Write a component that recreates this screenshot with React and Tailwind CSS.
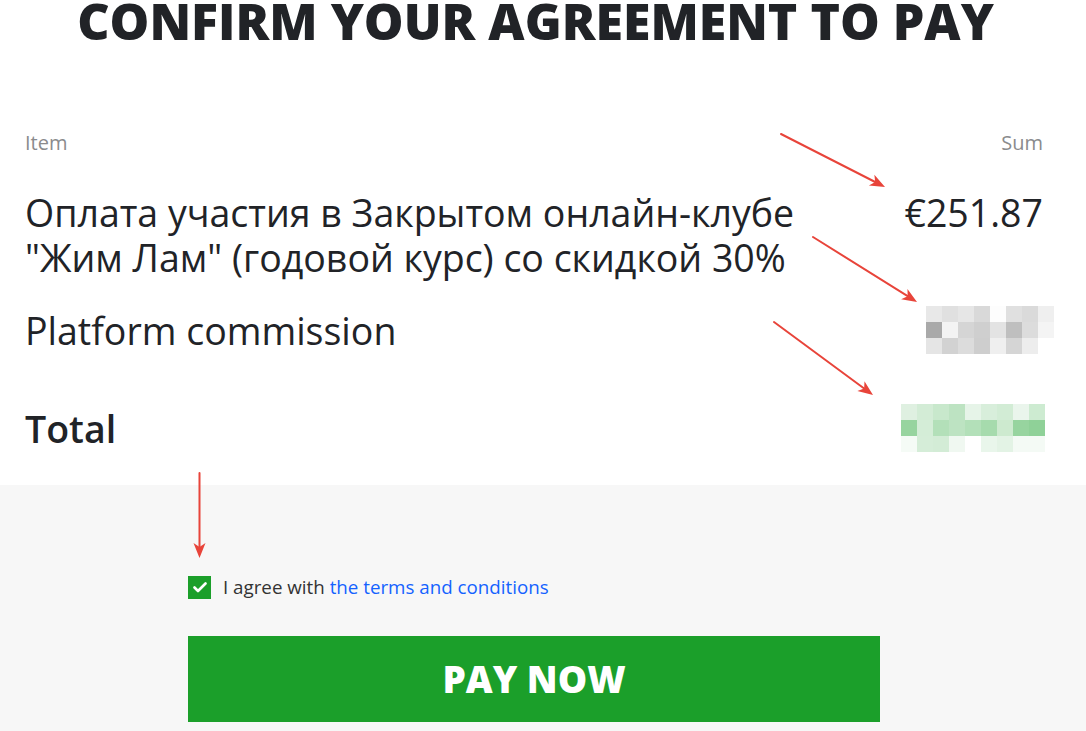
import React from "react";

const grayCells = [
  ["#e8e8e8", "#e0e0e0", "#e6e6e6", "#d9d9d9", "#fdfdfd", "#e0e0e0", "#dadada", "#efefef"],
  ["#a9a9a9", "#f3f3f3", "#d5d5d5", "#cfcfcf", "#e3e3e3", "#bfbfbf", "#dcdcdc", "#f4f4f4"],
  ["#e5e5e5", "#d2d2d2", "#dcdcdc", "#cecece", "#efefef", "#d5d5d5", "#ededed", "#ffffff"],
];

const greenCells = [
  ["#dff0e1", "#d3ecd6", "#c8e8cc", "#bde3c2", "#e6f4e8", "#d8eedb", "#d2ecd5", "#eaf5ec", "#cdebd1"],
  ["#97d49f", "#d4edd7", "#b3e0b9", "#bde3c2", "#b3e0b9", "#a6dbad", "#cdeacf", "#97d49f", "#8fd198"],
  ["#f5fbf6", "#d5edd8", "#d3ecd6", "#f0f8f1", "#ffffff", "#e9f6eb", "#e3f3e5", "#f4faf5", "#f4faf5"],
];

function Pixelated({ rows }) {
  return (
    <div className="flex flex-col">
      {rows.map((row, i) => (
        <div key={i} className="flex">
          {row.map((c, j) => (
            <div key={j} className="w-[16px] h-[16px]" style={{ backgroundColor: c }} />
          ))}
        </div>
      ))}
    </div>
  );
}

function Arrow({ x1, y1, x2, y2 }) {
  const dx = x2 - x1;
  const dy = y2 - y1;
  const len = Math.hypot(dx, dy);
  const ux = dx / len;
  const uy = dy / len;
  const hl = 15;
  const hw = 6;
  const bx = x2 - ux * hl;
  const by = y2 - uy * hl;
  const px = -uy;
  const py = ux;
  const pts = `${x2},${y2} ${bx + px * hw},${by + py * hw} ${bx + ux * 4},${by + uy * 4} ${bx - px * hw},${by - py * hw}`;
  return (
    <g>
      <line x1={x1} y1={y1} x2={bx + ux * 4} y2={by + uy * 4} stroke="#e8443a" strokeWidth="2" strokeLinecap="round" />
      <polygon points={pts} fill="#e8443a" />
    </g>
  );
}

export default function App() {
  return (
    <div
      className="relative w-[1086px] h-[731px] overflow-hidden bg-white text-[#212327]"
      style={{ fontFamily: '"Open Sans", "Noto Sans", sans-serif' }}
    >
      <div className="flex flex-col h-full">
        <h1 className="mt-[-4px] pr-[15px] text-center text-[50px] leading-none font-extrabold uppercase text-[#212327]">
          Confirm your agreement to pay
        </h1>

        <div className="mt-[85px] pl-[25px] pr-[43px] flex flex-col">
          <div className="flex justify-between text-[20px] leading-[24px] text-[#8a8b8d]">
            <span>Item</span>
            <span>Sum</span>
          </div>

          <div className="mt-[35px] flex justify-between items-start text-[37.5px] leading-[45px]">
            <span className="w-[800px]">
              Оплата участия в Закрытом онлайн-клубе "Жим Лам" (годовой курс) со скидкой 30%
            </span>
            <span>€251.87</span>
          </div>

          <div className="mt-[28px] flex justify-between items-start text-[37.5px] leading-[45px]">
            <span>Platform commission</span>
            <div className="mt-[-2px] mr-[-11px]">
              <Pixelated rows={grayCells} />
            </div>
          </div>

          <div className="mt-[50px] flex justify-between items-center text-[37.5px] leading-[45px] font-semibold">
            <span>Total</span>
            <div className="mr-[-2px]">
              <Pixelated rows={greenCells} />
            </div>
          </div>
        </div>

        <div className="mt-[33px] flex-1 bg-[#f7f7f7] flex flex-col pl-[188px]">
          <label className="mt-[90px] flex items-center gap-[12px] text-[18.75px] leading-[24px] text-[#333333]">
            <span className="w-[23px] h-[23px] bg-[#1b9f2a] flex items-center justify-center">
              <svg width="14" height="11" viewBox="0 0 14 11" fill="none">
                <path d="M1.5 5.5 L5 9 L12.5 1.5" stroke="white" strokeWidth="2.6" strokeLinecap="round" strokeLinejoin="round" />
              </svg>
            </span>
            <span>
              I agree with <a className="text-[#1462ff]">the terms and conditions</a>
            </span>
          </label>

          <button className="mt-[37px] w-[692px] h-[86px] bg-[#1b9f2a] text-white text-[37px] font-extrabold uppercase flex items-center justify-center">
            Pay now
          </button>
        </div>
      </div>

      <svg className="absolute inset-0 pointer-events-none" width="1086" height="731" viewBox="0 0 1086 731">
        <Arrow x1={781} y1={134} x2={885} y2={187} />
        <Arrow x1={813} y1={237} x2={917} y2={302} />
        <Arrow x1={774} y1={322} x2={873} y2={395} />
        <Arrow x1={199.5} y1={473} x2={199.5} y2={558} />
      </svg>
    </div>
  );
}
